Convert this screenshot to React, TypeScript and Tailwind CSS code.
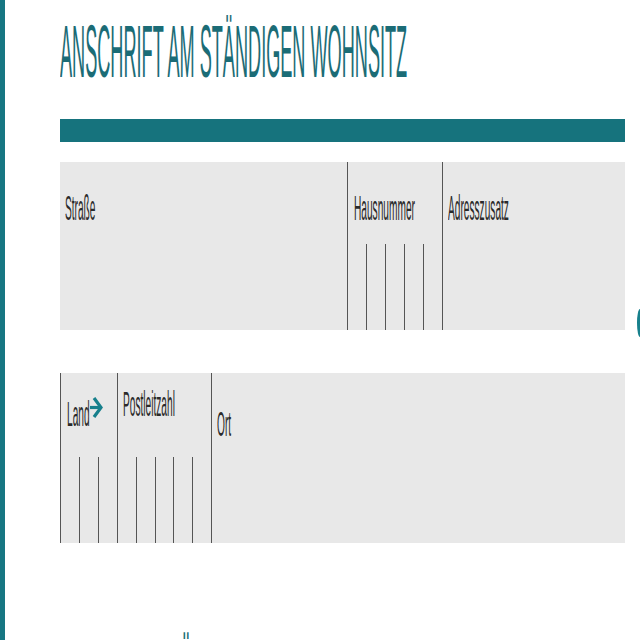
import React from "react";

function Label({ children }: { children: React.ReactNode }) {
  return (
    <span className="inline-block whitespace-nowrap origin-left scale-x-[0.29] text-[35px] leading-none text-[#2a2a2a]">
      {children}
    </span>
  );
}

function Comb({ n }: { n: number }) {
  return (
    <div className="mt-auto flex h-[86px]">
      {Array.from({ length: n }).map((_, i) => (
        <div key={i} className={i < n - 1 ? "flex-1 border-r border-[#555]" : "flex-1"} />
      ))}
    </div>
  );
}

export default function App() {
  return (
    <div className="relative w-[640px] h-[640px] overflow-hidden bg-white border-l-[5px] border-[#167682] font-['Liberation_Sans',Arial,sans-serif]">
      <div className="pl-[55px] pr-[15px] pt-[15px]">
        <h1 className="h-[74px] text-[74px] leading-none text-[#1b6c76] whitespace-nowrap">
          <span className="inline-block origin-left scale-x-[0.245]">ANSCHRIFT AM STÄNDIGEN WOHNSITZ</span>
        </h1>
        <div className="mt-[30px] h-[23px] bg-[#16737d]" />

        <div className="mt-[20px] h-[168px] bg-[#e8e8e8] flex">
          <div className="w-[288px] shrink-0 min-w-0 border-r border-[#555] flex flex-col pt-[28px] pl-[5px]">
            <Label>Straße</Label>
          </div>
          <div className="w-[95px] shrink-0 min-w-0 border-r border-[#555] flex flex-col">
            <div className="pt-[28px] pl-[6px]">
              <Label>Hausnummer</Label>
            </div>
            <Comb n={5} />
          </div>
          <div className="flex-1 min-w-0 flex flex-col pt-[28px] pl-[5px]">
            <Label>Adresszusatz</Label>
          </div>
        </div>

        <div className="mt-[43px] h-[170px] bg-[#e8e8e8] flex">
          <div className="w-[58px] shrink-0 min-w-0 border-l border-r border-[#555] flex flex-col">
            <div className="pt-[23px] pl-[6px] flex items-start">
              <div className="w-[23px] shrink-0">
                <Label>Land</Label>
              </div>
              <svg width="13" height="25" viewBox="0 0 13 25" preserveAspectRatio="none" className="mt-[-1px] shrink-0">
                <path d="M0 12.5 H9.5" stroke="#17808c" strokeWidth="3.2" fill="none" />
                <path d="M4 3 L11 12.5 L4 22" stroke="#17808c" strokeWidth="3.2" fill="none" strokeLinejoin="miter" />
              </svg>
            </div>
            <Comb n={3} />
          </div>
          <div className="w-[94px] shrink-0 min-w-0 border-r border-[#555] flex flex-col">
            <div className="pt-[13px] pl-[5px]">
              <Label>Postleitzahl</Label>
            </div>
            <Comb n={5} />
          </div>
          <div className="flex-1 min-w-0 flex flex-col pt-[33px] pl-[5px]">
            <Label>Ort</Label>
          </div>
        </div>

        <h2 className="mt-[90px] h-[74px] text-[74px] leading-none text-[#1b6c76] whitespace-nowrap">
          <span className="inline-block origin-left scale-x-[0.245]">ANSCHRIFT FÜR ZUSTELLUNGEN</span>
        </h2>
      </div>

      <svg className="absolute left-[631px] top-[306px]" width="12" height="34" viewBox="0 0 12 34">
        <ellipse cx="4" cy="17" rx="3" ry="14" fill="#17808c" />
      </svg>
    </div>
  );
}
